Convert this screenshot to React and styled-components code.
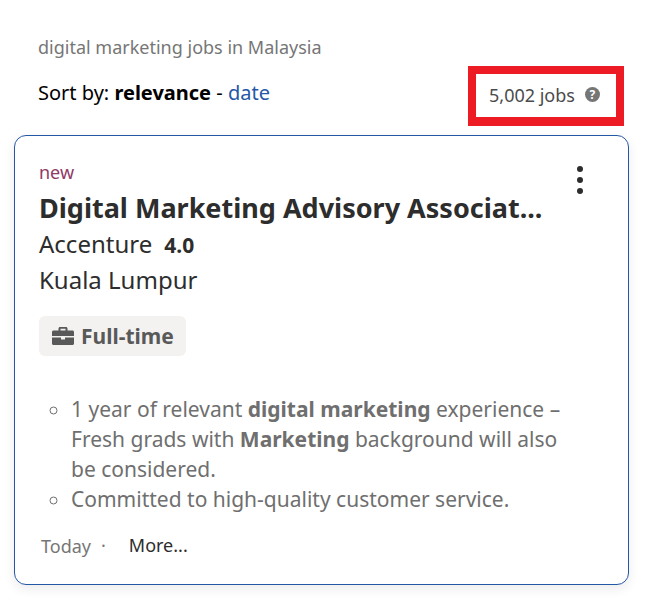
import React from 'react'
import styled, { createGlobalStyle } from 'styled-components'

const GlobalStyle = createGlobalStyle`
  html, body {
    margin: 0;
    padding: 0;
    background: #fff;
    font-family: "Noto Sans", "Liberation Sans", sans-serif;
  }
`

function BriefcaseIcon() {
  return (
    <svg width="22" height="18" viewBox="0 0 22 18" fill="#595959">
      <path d="M6.500 1.500C6.500.7 7.200 0 8 0h6c.8 0 1.500.7 1.500 1.500V3.500h5c.8 0 1.500.7 1.500 1.500V9H0V5c0-.8.7-1.500 1.500-1.500h5V1.500zM8.500 1.800v1.700h5V1.800h-5z" fillRule="evenodd" />
      <path d="M0 10.500h9V12.500h4v-2h9v6c0 .8-.7 1.500-1.500 1.500h-19C.7 18 0 17.300 0 16.500v-6z" />
    </svg>
  )
}

function App() {
  return (
    <Page>
      <GlobalStyle />
      <Heading>digital marketing jobs in Malaysia</Heading>
      <SortRow>
        <SortText>
          Sort by: <strong>relevance</strong> - <SortLink>date</SortLink>
        </SortText>
        <CountBox>
          5,002 jobs
          <HelpBadge>?</HelpBadge>
        </CountBox>
      </SortRow>
      <Card>
        <TopRow>
          <div>
            <NewLabel>new</NewLabel>
            <Title>Digital Marketing Advisory Associat...</Title>
          </div>
          <MenuDots>
            <span />
            <span />
            <span />
          </MenuDots>
        </TopRow>
        <Company>
          Accenture <Rating>4.0</Rating>
        </Company>
        <Location>Kuala Lumpur</Location>
        <Tag>
          <BriefcaseIcon />
          Full-time
        </Tag>
        <Snippet>
          <li>
            1 year of relevant <b>digital marketing</b> experience – Fresh grads with{' '}
            <b>Marketing</b> background will also be considered.
          </li>
          <li>Committed to high-quality customer service.</li>
        </Snippet>
        <Footer>
          <DateText>Today</DateText>
          <Dot>·</Dot>
          <MoreLink>More...</MoreLink>
        </Footer>
      </Card>
    </Page>
  )
}
export default App

const Page = styled.div`
  width: 649px;
  height: 599px;
  box-sizing: border-box;
  padding: 36px 20px 0 14px;
  overflow: hidden;
`

const Heading = styled.h1`
  margin: 0 0 0 24px;
  font-size: 18px;
  line-height: 22px;
  font-weight: 400;
  color: #767676;
`

const SortRow = styled.div`
  display: flex;
  justify-content: space-between;
  align-items: flex-start;
  margin-top: 8px;
  margin-left: 24px;
  margin-right: 5px;
`

const SortText = styled.div`
  font-size: 20px;
  line-height: 28px;
  margin-top: 13px;
  color: #000;
`

const SortLink = styled.a`
  color: #2557a7;
`

const CountBox = styled.div`
  display: flex;
  align-items: center;
  justify-content: center;
  box-sizing: border-box;
  width: 156px;
  height: 60px;
  padding: 0 3px 2px 0;
  border: 8px solid #ed1c24;
  border-bottom-width: 9px;
  font-size: 18px;
  color: #4b4b4b;
`

const HelpBadge = styled.span`
  display: inline-flex;
  align-items: center;
  justify-content: center;
  width: 15px;
  height: 15px;
  margin-left: 10px;
  border-radius: 50%;
  background: #767676;
  color: #fff;
  font-size: 12px;
  font-weight: 700;
  line-height: 1;
`

const Card = styled.div`
  box-sizing: border-box;
  width: 615px;
  height: 450px;
  margin-top: 9px;
  padding: 24px 20px 0 24px;
  border: 1px solid #2557a7;
  border-radius: 12px;
  box-shadow: 0 4px 12px rgba(0, 0, 0, 0.08);
  background: #fff;
`

const TopRow = styled.div`
  display: flex;
  justify-content: space-between;
  align-items: flex-start;
`

const NewLabel = styled.div`
  font-size: 18px;
  line-height: 24px;
  color: #8f3a66;
`

const Title = styled.h2`
  margin: 6px 0 0;
  font-size: 27px;
  line-height: 36px;
  font-weight: 700;
  color: #2d2d2d;
  white-space: nowrap;
`

const MenuDots = styled.div`
  display: flex;
  flex-direction: column;
  gap: 5px;
  margin: 6px 25px 0 0;

  span {
    width: 6px;
    height: 6px;
    border-radius: 50%;
    background: #2d2d2d;
  }
`

const Company = styled.div`
  display: flex;
  align-items: baseline;
  gap: 12px;
  margin-top: 1px;
  font-size: 24px;
  line-height: 34px;
  color: #2d2d2d;
`

const Rating = styled.span`
  font-size: 21px;
  font-weight: 700;
`

const Location = styled.div`
  font-size: 24px;
  line-height: 34px;
  margin-top: 1px;
  color: #2d2d2d;
`

const Tag = styled.div`
  display: inline-flex;
  align-items: center;
  gap: 7px;
  height: 40px;
  margin-top: 19px;
  padding: 0 12px 0 13px;
  border-radius: 6px;
  background: #f3f2f1;
  font-size: 21px;
  font-weight: 700;
  color: #595959;
`

const Snippet = styled.ul`
  margin: 38px 0 0;
  padding: 0 0 0 32px;
  list-style: circle;
  width: 500px;
  font-size: 21px;
  line-height: 30px;
  color: #6f6f6f;
`

const Footer = styled.div`
  display: flex;
  align-items: center;
  margin-top: 17px;
  margin-left: 2px;
  font-size: 18px;
  line-height: 26px;
`

const DateText = styled.span`
  color: #767676;
  margin-top: 2px;
`

const Dot = styled.span`
  color: #767676;
  margin: 0 23px 0 10px;
`

const MoreLink = styled.a`
  color: #2d2d2d;
`
